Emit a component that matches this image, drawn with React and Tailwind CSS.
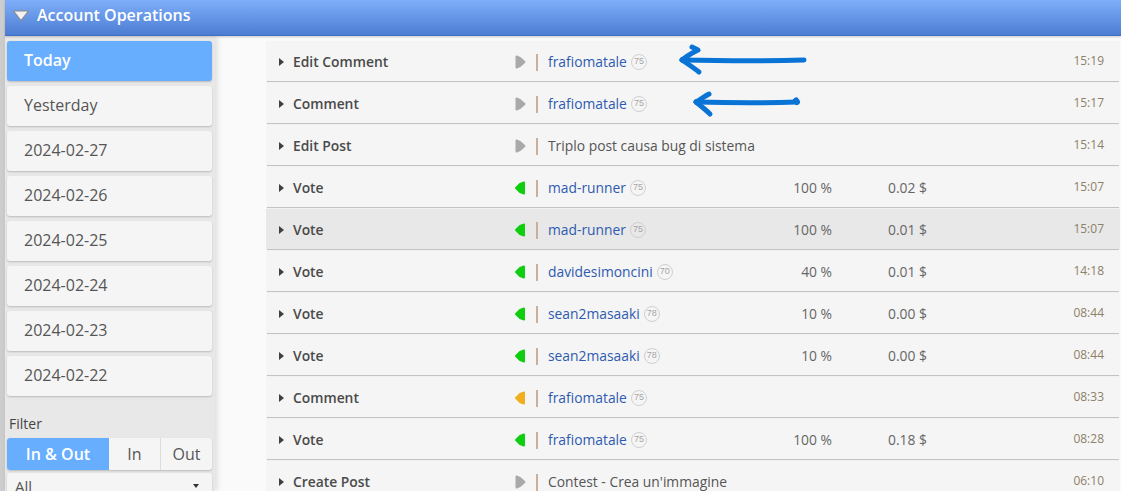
import React from "react";

const days = ["Today", "Yesterday", "2024-02-27", "2024-02-26", "2024-02-25", "2024-02-24", "2024-02-23", "2024-02-22"];

const rows = [
  { op: "Edit Comment", dir: "out", user: "frafiomatale", rep: 75, time: "15:19" },
  { op: "Comment", dir: "out", user: "frafiomatale", rep: 75, time: "15:17" },
  { op: "Edit Post", dir: "out", text: "Triplo post causa bug di sistema", time: "15:14" },
  { op: "Vote", dir: "in", user: "mad-runner", rep: 75, pct: "100 %", val: "0.02 $", time: "15:07" },
  { op: "Vote", dir: "in", user: "mad-runner", rep: 75, pct: "100 %", val: "0.01 $", time: "15:07", hover: true },
  { op: "Vote", dir: "in", user: "davidesimoncini", rep: 70, pct: "40 %", val: "0.01 $", time: "14:18" },
  { op: "Vote", dir: "in", user: "sean2masaaki", rep: 78, pct: "10 %", val: "0.00 $", time: "08:44" },
  { op: "Vote", dir: "in", user: "sean2masaaki", rep: 78, pct: "10 %", val: "0.00 $", time: "08:44" },
  { op: "Comment", dir: "warn", user: "frafiomatale", rep: 75, time: "08:33" },
  { op: "Vote", dir: "in", user: "frafiomatale", rep: 75, pct: "100 %", val: "0.18 $", time: "08:28" },
  { op: "Create Post", dir: "out", text: "Contest - Crea un'immagine", time: "06:10" },
];

function DirArrow({ dir }) {
  if (dir === "out") {
    return (
      <svg width="12" height="14" viewBox="0 0 12 14" className="shrink-0">
        <path d="M2.5 1.5 L2.5 12.5 L6 11 L10.5 7 L6 3 Z" fill="#a9a9a9" stroke="#a9a9a9" strokeWidth="2" strokeLinejoin="round" />
      </svg>
    );
  }
  const color = dir === "in" ? "#0fce0f" : "#f0b01e";
  return (
    <svg width="12" height="14" viewBox="0 0 12 14" className="shrink-0">
      <path d="M10 1.5 L10 12.5 L6 11 L2 7 L6 3 Z" fill={color} stroke={color} strokeWidth="2" strokeLinejoin="round" />
    </svg>
  );
}

function Row({ row }) {
  return (
    <div
      className={`mb-[2px] mr-[1px] flex h-[40px] items-center pt-[2px] text-[13.85px] shadow-[0_2px_1px_-1px_rgba(0,0,0,0.22)] ${
        row.hover ? "bg-[#e8e8e8]" : "bg-[#f5f5f5]"
      }`}
    >
      <svg width="5" height="8" viewBox="0 0 5 8" className="ml-[13px] shrink-0">
        <path d="M0 0 L5 4 L0 8 Z" fill="#3f3f3f" />
      </svg>
      <div className="ml-[9px] w-[221px] shrink-0 font-semibold text-[#4a4a4a]">{row.op}</div>
      <DirArrow dir={row.dir} />
      <div className="ml-[10px] mr-[10px] h-[17px] w-[2px] shrink-0 bg-[#c9b09c]" />
      <div className="flex w-[245px] shrink-0 items-center">
        {row.user ? (
          <>
            <span className="text-[#2e5bb0]">{row.user}</span>
            <span className="ml-[4px] flex h-[16px] w-[16px] items-center justify-center rounded-full border border-[#d0d0d0] font-['Liberation_Sans',sans-serif] text-[9px] text-[#a5a5a5]">
              {row.rep}
            </span>
          </>
        ) : (
          <span className="whitespace-nowrap text-[#555]">{row.text}</span>
        )}
      </div>
      <div className="w-[39px] shrink-0 whitespace-nowrap text-right text-[#666]">{row.pct}</div>
      <div className="ml-[56px] w-[60px] shrink-0 whitespace-nowrap text-[#666]">{row.val}</div>
      <div className="ml-auto mr-[16px] -translate-y-[1px] text-[12px] text-[#8d8068]">{row.time}</div>
    </div>
  );
}

export default function App() {
  return (
    <div className="relative h-screen w-full overflow-hidden bg-[#fafafa] font-['Open_Sans',sans-serif]">
      <div className="flex h-full">
        <div className="w-[5px] shrink-0 bg-[#cdcdcd]" />
        <div className="flex min-w-0 flex-1 flex-col">
          <div className="z-10 flex h-[36px] shrink-0 items-center border-b border-[#3f6fc7] bg-gradient-to-b from-[#7eaefa] to-[#4d7dd2] pb-[5px] pl-[7px] shadow-[0_1px_2px_rgba(0,0,0,0.2)]">
            <svg width="18" height="13" viewBox="0 0 18 13" className="shrink-0">
              <path d="M1.5 2 L16.5 2 L9 11.5 Z" fill="#f2f2f2" stroke="#8a8a8a" strokeWidth="1.2" strokeLinejoin="round" />
            </svg>
            <span className="ml-[7px] text-[16px] font-semibold text-white">Account Operations</span>
          </div>
          <div className="flex min-h-0 flex-1">
            <div className="flex w-[210px] shrink-0 flex-col bg-[#e8e8e8] pl-[2px] pr-[3px] pt-[5px] shadow-[2px_0_6px_rgba(0,0,0,0.12)]">
              {days.map((d, i) => (
                <div
                  key={d}
                  className={`mb-[5px] flex h-[40px] shrink-0 items-center rounded-[3px] pb-[2px] pl-[17px] text-[16px] shadow-[0_1px_2px_rgba(0,0,0,0.2)] ${
                    i === 0 ? "bg-[#68aeff] font-semibold text-white" : "bg-[#f5f5f5] text-[#555]"
                  }`}
                >
                  {d}
                </div>
              ))}
              <div className="mt-[13px] pl-[2px] text-[14px] leading-[19px] text-[#444]">Filter</div>
              <div className="mt-[5px] flex h-[32px] shrink-0 overflow-hidden rounded-[3px] bg-[#f5f5f5] text-[16px] text-[#555] shadow-[0_1px_2px_rgba(0,0,0,0.2)]">
                <div className="flex w-[102px] items-center justify-center bg-[#68aeff] font-semibold text-white">In &amp; Out</div>
                <div className="flex w-[52px] items-center justify-center border-r border-[#dcdcdc]">In</div>
                <div className="flex flex-1 items-center justify-center">Out</div>
              </div>
              <div className="mt-[3px] flex h-[32px] shrink-0 items-center justify-between rounded-[3px] bg-[#f5f5f5] pb-[6px] pl-[8px] pr-[13px] text-[15px] text-[#555] shadow-[0_1px_2px_rgba(0,0,0,0.2)]">
                <span>All</span>
                <svg width="6" height="4" viewBox="0 0 6 4">
                  <path d="M0 0 L6 0 L3 4 Z" fill="#333" />
                </svg>
              </div>
            </div>
            <div className="min-w-0 flex-1 pl-[51px] pt-[5px]">
              {rows.map((r, i) => (
                <Row key={i} row={r} />
              ))}
            </div>
          </div>
        </div>
      </div>
      {/* hand drawn arrows on top of the list */}
      <svg className="pointer-events-none absolute left-0 top-0" width="1121" height="491" viewBox="0 0 1121 491" fill="none">
        <g stroke="#0a74d6" strokeWidth="5" strokeLinecap="round" strokeLinejoin="round">
          <path d="M804 60 C770 61 730 61 682 60" />
          <path d="M682 60 C688 55 694 52 698 50 L692 47" />
          <path d="M682 60 C688 64 694 68 699 72" />
          <path d="M797 102 C770 103 730 103 696 102" />
          <path d="M696 102 C701 99 705 96 709 94" />
          <path d="M696 102 C701 106 706 110 710 114" />
          <path d="M796 100.5 L797 102" strokeWidth="6" />
        </g>
      </svg>
    </div>
  );
}
